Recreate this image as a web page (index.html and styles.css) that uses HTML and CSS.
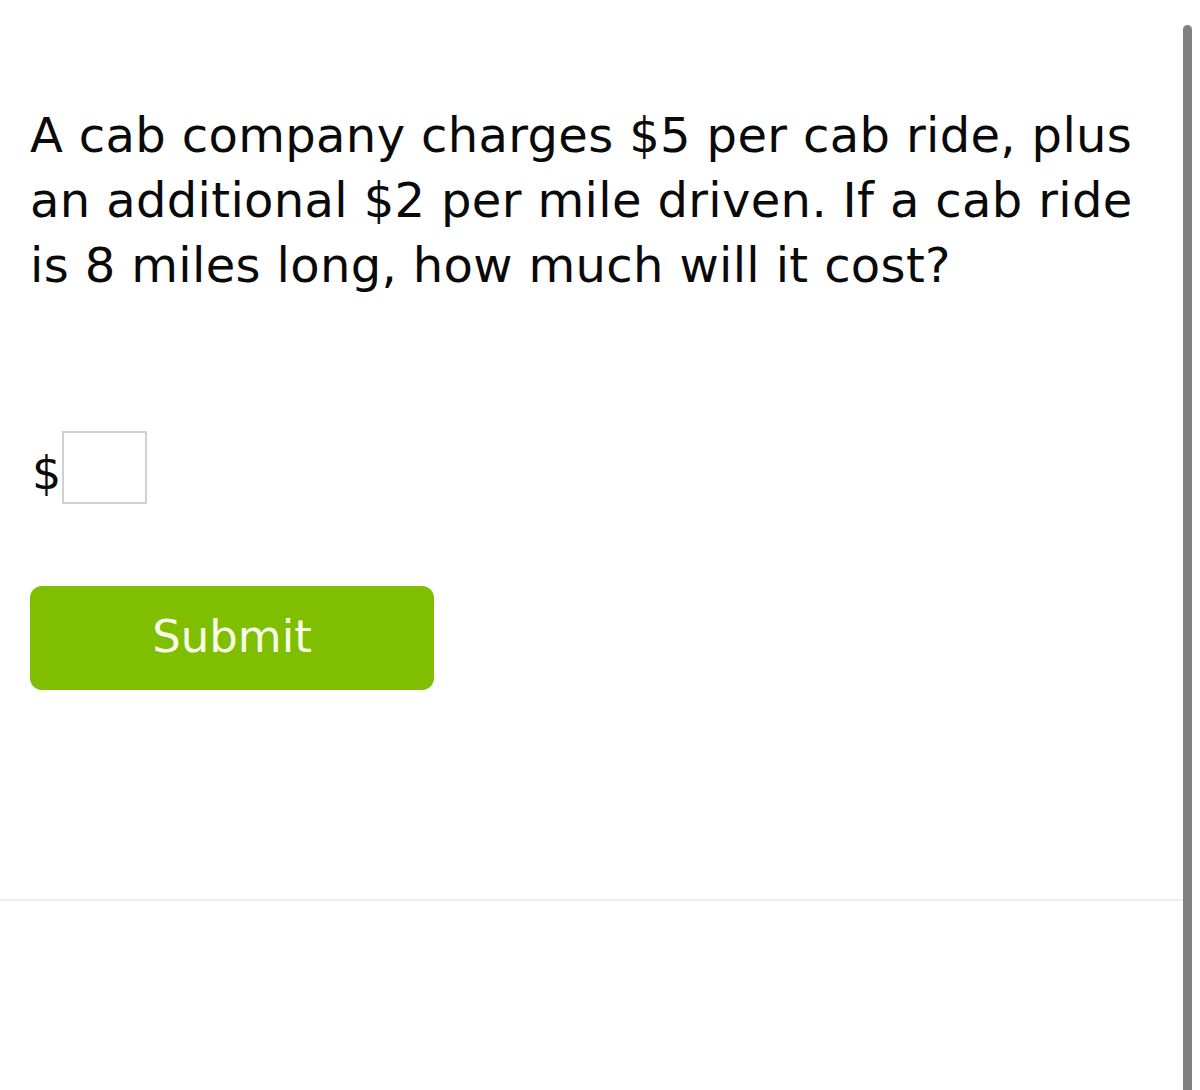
FILE: index.html
```html
<!DOCTYPE html>
<html lang="en">
<head>
<meta charset="utf-8">
<title>Question</title>
<link rel="stylesheet" href="styles.css">
</head>
<body>
<div class="page">
  <main class="content">
    <p class="question">A cab company charges $5 per cab ride, plus an additional $2 per mile driven. If a cab ride is 8 miles long, how much will it cost?</p>
    <div class="answer">
      <span class="dollar">$</span>
      <span class="box"></span>
    </div>
    <button class="submit" type="button">Submit</button>
  </main>
  <div class="divider"></div>
  <div class="scrollbar"></div>
</div>
</body>
</html>
```
FILE: styles.css
```css
html, body {
  margin: 0;
  padding: 0;
  background: #ffffff;
}
body {
  font-family: "DejaVu Sans", Verdana, sans-serif;
  color: #0a0a0a;
  width: 1200px;
  height: 1090px;
  overflow: hidden;
}
.page {
  position: relative;
  width: 1200px;
  height: 1090px;
}
.content {
  padding: 103px 0 0 30px;
  width: 1150px;
  height: 797px;
  box-sizing: border-box;
}
.question {
  margin: 0;
  font-size: 48px;
  line-height: 65px;
  letter-spacing: 0.35px;
  width: 1120px;
}
.answer {
  display: flex;
  align-items: flex-end;
  margin-top: 132px;
  height: 74px;
}
.dollar {
  font-size: 46px;
  line-height: 1;
  padding-left: 2px;
  margin-bottom: 8px;
  width: 30px;
}
.box {
  display: block;
  width: 81px;
  height: 69px;
  border: 2px solid #d0d0d0;
}
.submit {
  display: flex;
  align-items: center;
  justify-content: center;
  margin-top: 82px;
  width: 404px;
  height: 104px;
  border: none;
  border-radius: 12px;
  background: #80be00;
  color: #f8ffe8;
  font-family: "DejaVu Sans", Verdana, sans-serif;
  font-size: 45px;
  padding: 0 0 4px 0;
}
.divider {
  height: 2px;
  width: 1183px;
  background: #eaf0f3;
  margin-top: 102px;
}
.scrollbar {
  position: absolute;
  top: 25px;
  left: 1183px;
  width: 9px;
  height: 1080px;
  background: #808080;
  border-radius: 5px 5px 0 0;
}
```
